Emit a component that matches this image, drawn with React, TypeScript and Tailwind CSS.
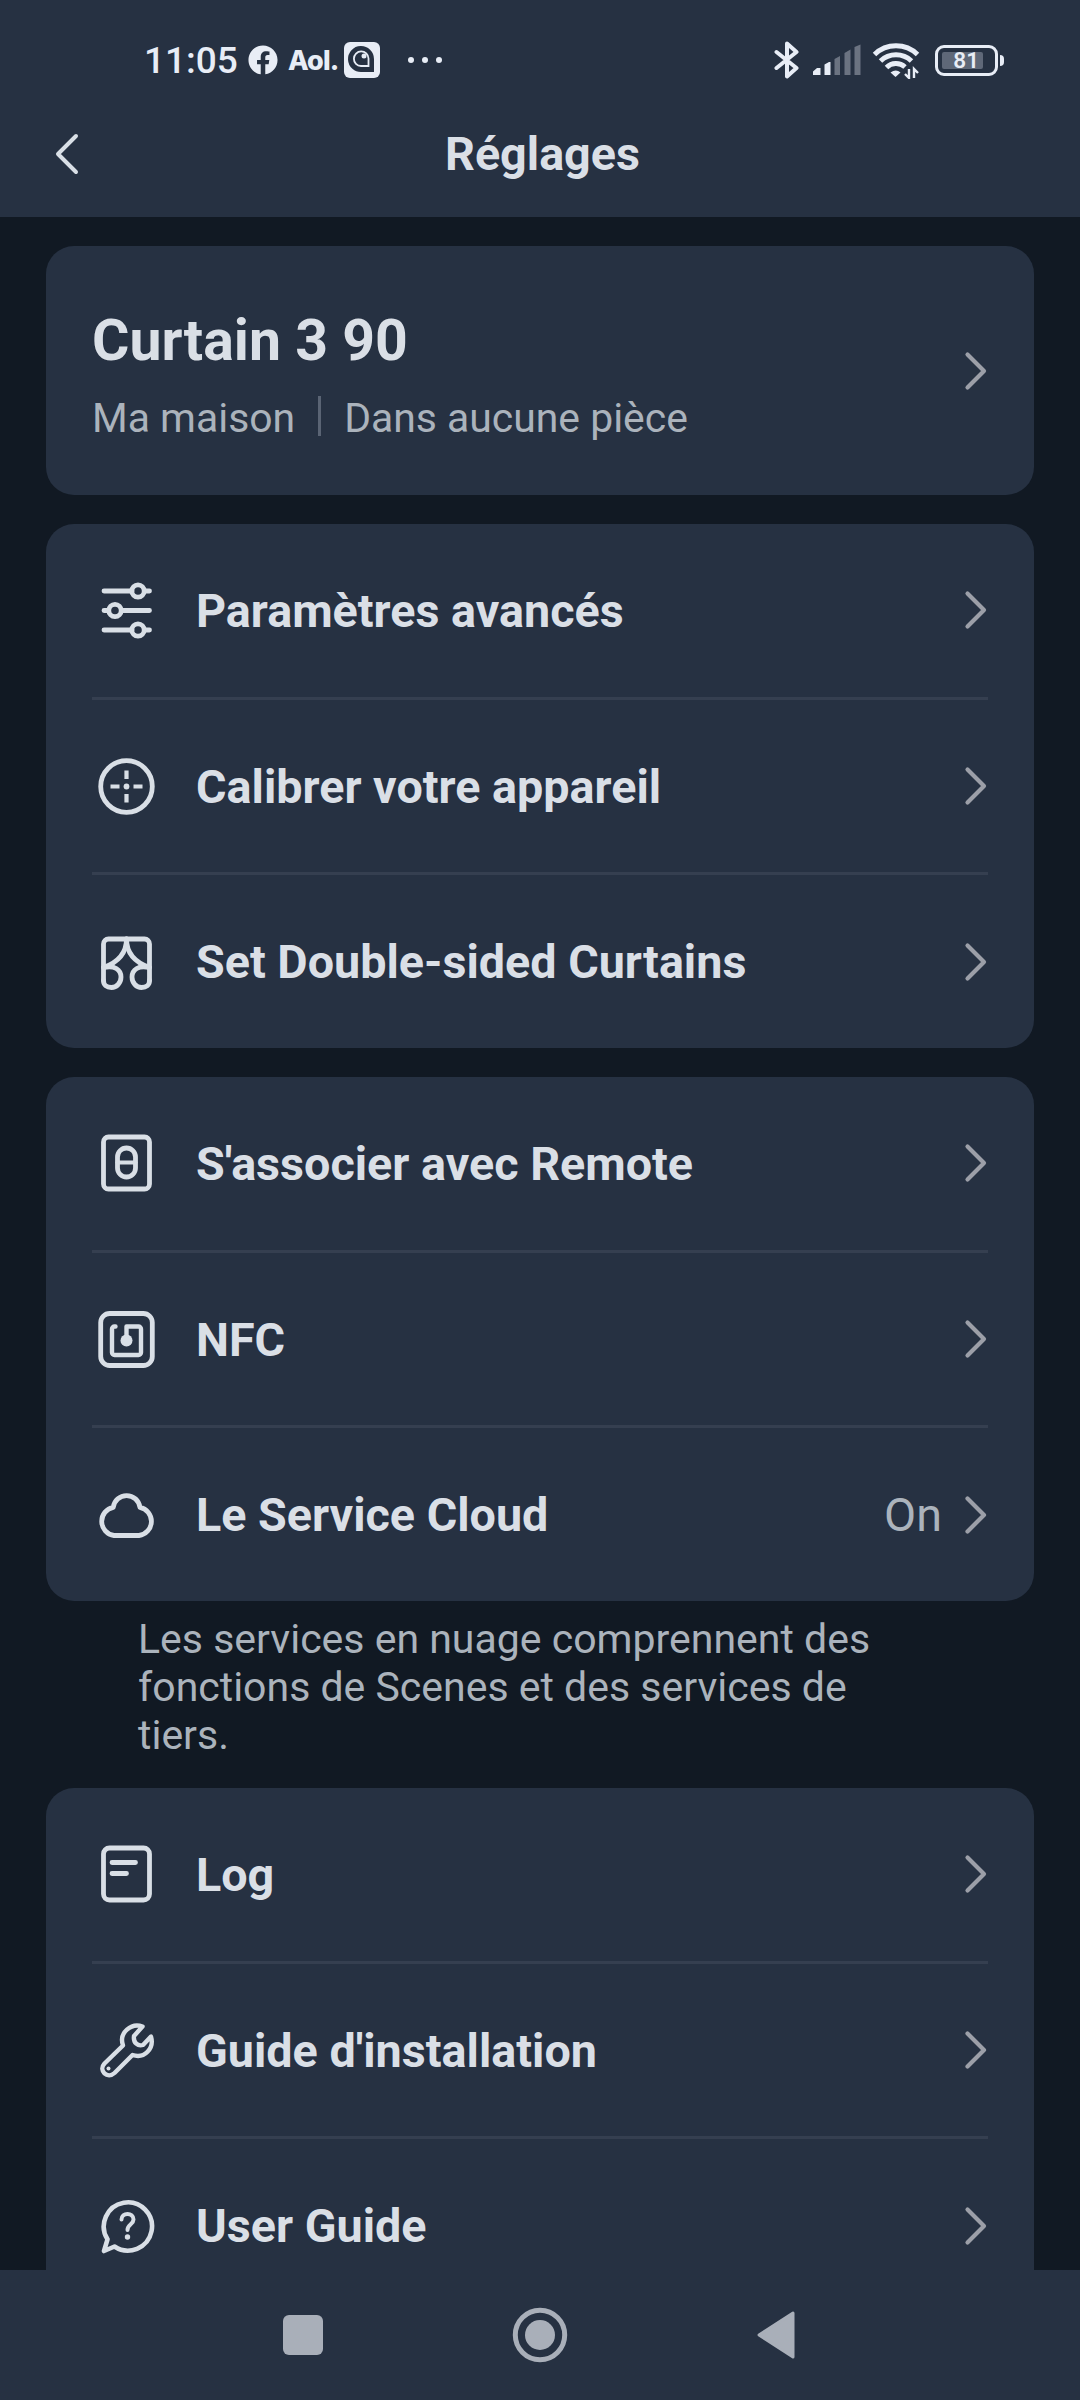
import { Fragment } from 'react'
import type { ReactNode } from 'react'
import { FaFacebook } from 'react-icons/fa'

type IconProps = { children: ReactNode }

function RowIcon({ children }: IconProps) {
  return (
    <svg
      viewBox="0 0 60 60"
      className="h-[60px] w-[60px] shrink-0"
      fill="none"
      stroke="#d9dfe6"
      strokeWidth="4.8"
      strokeLinecap="round"
      strokeLinejoin="round"
    >
      {children}
    </svg>
  )
}

const SlidersIcon = () => (
  <RowIcon>
    <path d="M8 11h28M49 11h4.500M8 30.500h4M26 30.500h27.500M8 50h28M49 50h4.500" />
    <circle cx="42" cy="11" r="6.200" />
    <circle cx="19" cy="30.500" r="6.200" />
    <circle cx="42" cy="50" r="6.200" />
  </RowIcon>
)

const CalibrateIcon = () => (
  <RowIcon>
    <circle cx="30.500" cy="30.500" r="25.800" />
    <path d="M30.500 14.500v8.500M30.500 38v8.500M14.500 30.500h9M37.500 30.500h9" strokeLinecap="butt" strokeWidth="4.2" />
    <circle cx="30.500" cy="30.500" r="2.900" fill="#d9dfe6" stroke="none" />
  </RowIcon>
)

const CurtainsIcon = () => (
  <RowIcon>
    <path d="M7.500 48.500V12a5 5 0 0 1 5-5h36a5 5 0 0 1 5 5v36.500" />
    <path d="M30.500 7c0 14-9 23.500-23 28.500" />
    <path d="M30.500 7c0 14 9 23.500 23 28.500" />
    <path d="M8 35.500c10-2.500 17 2 17 9.500 0 6-4.500 10.500-9.500 10.500-5 0-8-2.500-8-7" />
    <path d="M53 35.500c-10-2.500-17 2-17 9.500 0 6 4.500 10.500 9.500 10.500 5 0 8-2.500 8-7" />
  </RowIcon>
)

const RemoteIcon = () => (
  <RowIcon>
    <rect x="7.500" y="4" width="46" height="52" rx="5" />
    <rect x="21.500" y="15" width="18" height="29" rx="9" />
    <path d="M21.500 29.500h18" strokeWidth="4" />
  </RowIcon>
)

const NfcIcon = () => (
  <RowIcon>
    <rect x="4.700" y="4.500" width="51.600" height="52" rx="9" />
    <path
      d="M19.500 17.500h-1a2.500 2.500 0 0 0-2.500 2.500V43.500a2.500 2.500 0 0 0 2.500 2.500h24A2.500 2.500 0 0 0 45 43.500V20a2.500 2.500 0 0 0-2.500-2.500h-12v12"
      strokeWidth="4.400"
    />
    <circle cx="30.500" cy="31.500" r="6" fill="#d9dfe6" stroke="none" />
  </RowIcon>
)

const CloudIcon = () => (
  <RowIcon>
    <path d="M18 50.500a14.300 14.300 0 0 1-.7-28.200a13.400 13.400 0 0 1 26.600 0a14.300 14.300 0 0 1-.9 28.200z" />
  </RowIcon>
)

const LogIcon = () => (
  <RowIcon>
    <rect x="7.500" y="4" width="46" height="52" rx="6" />
    <path d="M16 18.500h23.500M16 29.500h14.500" />
  </RowIcon>
)

const WrenchIcon = () => (
  <RowIcon>
    <path
      d="M46.500 6.500c-11-4-24 6-19.500 19L8.500 43.500c-6.500 7 3 16 10 9.500l18-18c12 4 22-6.500 18.500-18.500l-8 8.500c-5 1.500-10-2-9-9z"
      strokeWidth="4.400"
    />
    <circle cx="12.500" cy="48.500" r="2" fill="#d9dfe6" stroke="none" />
  </RowIcon>
)

const GuideIcon = () => (
  <RowIcon>
    <path d="M11.500 43.300A24.100 24.100 0 1 1 18.500 50.500L8 55z" strokeWidth="4.600" />
    <path d="M25.500 23.500c0-7.500 12-7.500 12 0 0 5-6 4.500-6 10.500" strokeWidth="4" />
    <circle cx="31.500" cy="41" r="2.700" fill="#d9dfe6" stroke="none" />
  </RowIcon>
)

function Chevron() {
  return (
    <svg
      viewBox="0 0 24 40"
      className="h-10 w-6 shrink-0"
      fill="none"
      stroke="#9c9fa8"
      strokeWidth="4.2"
      strokeLinecap="round"
      strokeLinejoin="round"
    >
      <path d="M3.500 3.500L20 20 3.500 36.500" />
    </svg>
  )
}

type Row = { label: string; icon: ReactNode; value?: string }

const deviceRows: Row[] = [
  { label: 'Paramètres avancés', icon: <SlidersIcon /> },
  { label: 'Calibrer votre appareil', icon: <CalibrateIcon /> },
  { label: 'Set Double-sided Curtains', icon: <CurtainsIcon /> },
]

const linkRows: Row[] = [
  { label: "S'associer avec Remote", icon: <RemoteIcon /> },
  { label: 'NFC', icon: <NfcIcon /> },
  { label: 'Le Service Cloud', icon: <CloudIcon />, value: 'On' },
]

const helpRows: Row[] = [
  { label: 'Log', icon: <LogIcon /> },
  { label: "Guide d'installation", icon: <WrenchIcon /> },
  { label: 'User Guide', icon: <GuideIcon /> },
]

function SettingsCard({ rows }: { rows: Row[] }) {
  return (
    <div className="flex h-[524px] flex-col rounded-[28px] bg-[#263142] px-[46px]">
      {rows.map((row, i) => (
        <Fragment key={row.label}>
          {i > 0 && <div className="h-[3px] shrink-0 bg-[#353f50]" />}
          <div className="flex flex-1 items-center pl-1">
            {row.icon}
            <span className="ml-10 flex-1 pt-[2px] text-[46.7px] leading-none font-bold text-[#dadfe6]">
              {row.label}
            </span>
            {row.value && (
              <span className="mr-[22px] pt-[2px] text-[46.7px] leading-none text-[#abb3bc]">{row.value}</span>
            )}
            <Chevron />
          </div>
        </Fragment>
      ))}
    </div>
  )
}

function StatusBar() {
  return (
    <div className="flex h-[120px] items-center pr-[76px] pl-[144px] text-[#e8edf6]">
      <span className="pt-px text-[37px] leading-none font-medium">11:05</span>
      <FaFacebook className="ml-[10px] h-[30px] w-[30px]" />
      <span className="ml-[10px] font-[Inter] text-[27px] leading-none font-extrabold tracking-[-0.03em]">Aol.</span>
      <svg viewBox="0 0 36 36" className="ml-[6px] h-9 w-9">
        <rect width="36" height="36" rx="6" fill="#e8edf6" />
        <path d="M30 30H18A13 13 0 1 1 30 17z" fill="#263142" />
        <path d="M24.500 24H17a7.300 7.300 0 1 1 7.500-7.500z" fill="none" stroke="#e8edf6" strokeWidth="1.800" />
        <circle cx="20" cy="14" r="2.500" fill="#e8edf6" />
      </svg>
      <div className="ml-7 flex gap-2">
        <i className="h-[6px] w-[6px] rounded-full bg-[#e8edf6]" />
        <i className="h-[6px] w-[6px] rounded-full bg-[#e8edf6]" />
        <i className="h-[6px] w-[6px] rounded-full bg-[#e8edf6]" />
      </div>

      <div className="ml-auto flex items-center">
        <svg
          viewBox="0 0 26 40"
          className="h-10 w-[26px]"
          fill="none"
          stroke="#e8edf6"
          strokeWidth="4"
          strokeLinecap="round"
          strokeLinejoin="round"
        >
          <path d="M2.500 12L22.500 28 13 36.500V3.500L22.500 12 2.500 28" />
        </svg>
        <svg viewBox="0 0 50 32" className="ml-3 h-8 w-[50px]">
          <path d="M1 31v-3.500l4-3.500h3.500v7zM12.500 31V20.500l4.500-2.500h1.500v13z" fill="#e8edf6" />
          <path d="M22.500 31V15l5.500-3v19zM32.500 31V9l6-3.500V31zM42.500 31V3l6-2.500V31z" fill="#6b7381" />
        </svg>
        <svg viewBox="0 0 48 38" className="ml-[10px] h-[38px] w-12" fill="none" stroke="#e8edf6" strokeWidth="5">
          <path d="M2.500 13.500a31 31 0 0 1 43 0M8.500 20a22.500 22.500 0 0 1 31 0M14.500 26.500a13.500 13.500 0 0 1 18.500-.5" />
          <path d="M18.500 31.500q5.500-4 10 0L23.500 36z" fill="#e8edf6" stroke="none" />
          <path d="M37 28v9l-4-4M42 37v-9l4 4" strokeWidth="2.400" />
        </svg>
        <div className="ml-[15px] flex h-[31px] w-[63px] items-center rounded-[9px] border-[3px] border-[#e8edf6] p-1">
          <div className="flex h-full w-[41px] items-center justify-end rounded-[2px] bg-[#5f6878] pr-1 text-[22.5px] leading-none font-semibold">
            81
          </div>
        </div>
        <i className="ml-[2px] h-[11px] w-1 rounded-r bg-[#e8edf6]" />
      </div>
    </div>
  )
}

export default function App() {
  return (
    <div className="flex h-[2400px] w-[1080px] flex-col overflow-hidden bg-[#111923] font-[Roboto,sans-serif]">
      <header className="h-[217px] shrink-0 bg-[#263142]">
        <StatusBar />
        <div className="grid h-[68px] grid-cols-[1fr_auto_1fr] items-center px-[54px]">
          <svg
            viewBox="0 0 26 44"
            className="h-11 w-[26px]"
            fill="none"
            stroke="#d9dfe6"
            strokeWidth="4"
            strokeLinecap="round"
            strokeLinejoin="round"
          >
            <path d="M22 4L4 22l18 18" />
          </svg>
          <h1 className="pl-[5px] text-[46.7px] leading-none font-bold text-[#dadfe6]">Réglages</h1>
        </div>
      </header>

      <main className="flex min-h-0 flex-1 flex-col overflow-hidden px-[46px] pt-[29px] *:shrink-0">
        <section className="flex h-[249px] items-center rounded-[28px] bg-[#263142] px-[46px]">
          <div className="flex-1 pt-[10px]">
            <h2 className="text-[57.2px] leading-[68px] font-bold text-[#dadfe6]">Curtain 3 90</h2>
            <div className="mt-[17px] flex items-center text-[40.9px] leading-[52px] text-[#abb3bc]">
              <span>Ma maison</span>
              <i className="mr-[23px] mb-1 ml-[23px] h-10 w-[3px] bg-[#5a6474]" />
              <span>Dans aucune pièce</span>
            </div>
          </div>
          <Chevron />
        </section>

        <div className="mt-[29px]">
          <SettingsCard rows={deviceRows} />
        </div>
        <div className="mt-[29px]">
          <SettingsCard rows={linkRows} />
        </div>
        <p className="mt-[14px] w-[860px] pl-[92px] text-[41px] leading-[48px] text-[#abb3bc]">
          Les services en nuage comprennent des fonctions de Scenes et des services de tiers.
        </p>
        <div className="mt-[29px]">
          <SettingsCard rows={helpRows} />
        </div>
      </main>

      <nav className="flex h-[130px] shrink-0 items-center bg-[#263142] pl-[283px]">
        <i className="h-10 w-10 rounded-[6px] bg-[#a9afb9]" />
        <svg viewBox="0 0 56 56" className="ml-[189px] h-14 w-14">
          <circle cx="28" cy="28" r="24.700" fill="none" stroke="#a9afb9" strokeWidth="5" />
          <circle cx="28" cy="28" r="15" fill="#a9afb9" />
        </svg>
        <svg viewBox="0 0 38 48" className="ml-[189px] h-12 w-[38px]">
          <path d="M2 24L36 2v44z" fill="#a9afb9" stroke="#a9afb9" strokeWidth="3" strokeLinejoin="round" />
        </svg>
      </nav>
    </div>
  )
}
